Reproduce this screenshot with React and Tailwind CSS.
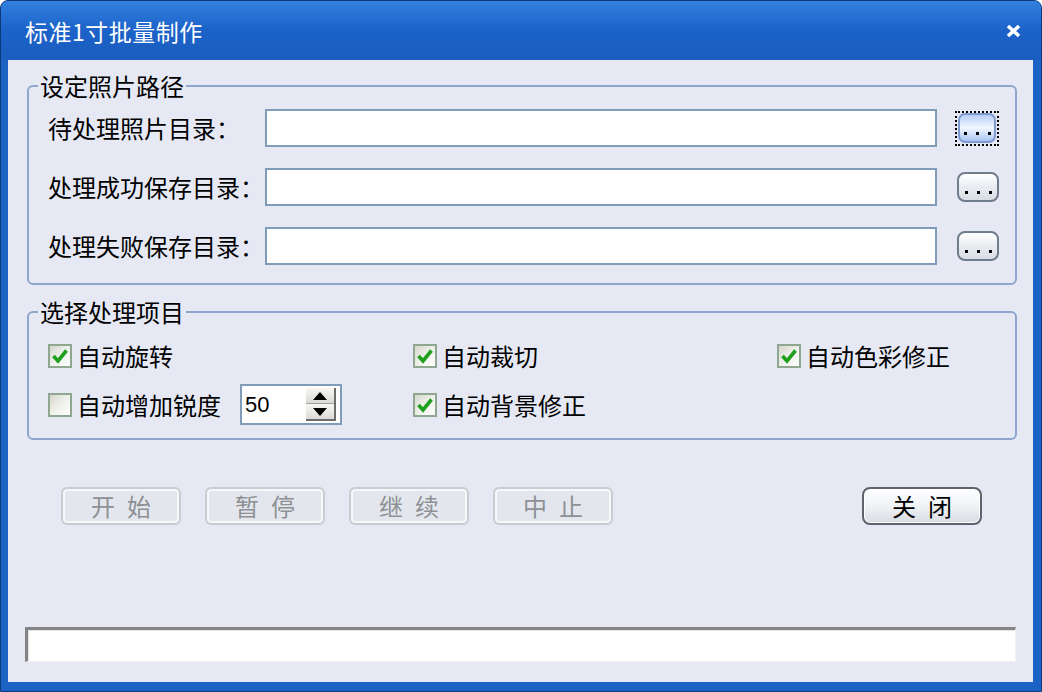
import React from "react";

const cjk = { fontFamily: '"Noto Sans CJK SC", "Noto Sans", sans-serif' };

const Check = ({ checked }) => (
	<span className="w-[24px] h-[24px] shrink-0 border-2 border-[#8fa68f] bg-gradient-to-br from-[#d6d8cf] via-[#eef0ea] to-white flex items-center justify-center">
		{checked && (
			<svg width="18" height="18" viewBox="0 0 18 18">
				<path d="M2.5 9 L7 14 L15.5 3.5" fill="none" stroke="#1fa01f" strokeWidth="3.6" strokeLinejoin="miter" />
			</svg>
		)}
	</span>
);

const CheckItem = ({ checked, label }) => (
	<label className="flex items-center gap-[5px] h-[24px] text-[24px] leading-[24px] text-black">
		<Check checked={checked} />
		<span>{label}</span>
	</label>
);

const Dots = () => (
	<span className="flex gap-[9px] mb-[6px]">
		<span className="w-[3px] h-[3px] bg-black" />
		<span className="w-[3px] h-[3px] bg-black" />
		<span className="w-[3px] h-[3px] bg-black" />
	</span>
);

const BrowseButton = ({ focused }) =>
	focused ? (
		<div className="w-[44px] h-[35px] border-2 border-dotted border-black flex items-center justify-center">
			<button className="w-[38px] h-[30px] rounded-[7px] border-2 border-[#7e9ad0] bg-gradient-to-b from-[#b7cff7] via-[#f2f6ff] to-[#a9c4f2] flex items-end justify-center">
				<Dots />
			</button>
		</div>
	) : (
		<button className="w-[42px] h-[30px] rounded-[8px] border-2 border-[#6f7c8d] bg-gradient-to-b from-white via-[#e9edf1] to-[#d6dde3] flex items-end justify-center">
			<Dots />
		</button>
	);

const PathRow = ({ label, focused }) => (
	<div className="flex items-center h-[38px]">
		<span className="w-[217px] text-[24px] leading-[24px] text-black">{label}</span>
		<input
			type="text"
			className="w-[672px] h-[38px] border-2 border-[#7f9db9] bg-white outline-none"
		/>
		<div className="w-[62px] flex justify-end">
			<BrowseButton focused={focused} />
		</div>
	</div>
);

const ActionButton = ({ label, disabled }) =>
	disabled ? (
		<button className="w-[120px] h-[38px] rounded-[6px] border-2 border-[#c9ccd1] bg-[#e3e7ed] shadow-[inset_0_0_0_2px_#f7f8fa] text-[24px] leading-[24px] text-[#8e9094] tracking-[12px] pl-[12px]">
			{label}
		</button>
	) : (
		<button className="w-[120px] h-[38px] rounded-[8px] border-2 border-[#5c636d] bg-gradient-to-b from-white via-[#f0f2f5] to-[#d7dde4] shadow-[inset_0_0_0_1px_#ffffff] text-[24px] leading-[24px] text-black tracking-[12px] pl-[12px]">
			{label}
		</button>
	);

export default function App() {
	return (
		<div className="w-[1042px] h-[692px] bg-[#1c62c4] border border-[#0c3a78] rounded-t-[8px] flex flex-col overflow-hidden" style={cjk}>
			{/* Title bar */}
			<div className="h-[59px] shrink-0 flex items-center justify-between pl-[24px] pr-[20px] bg-gradient-to-b from-[#3380e0] via-[#1c62c8] to-[#1a5dbf]">
				<span className="text-white text-[23px] leading-[26px] tracking-[0.5px]">标准1寸批量制作</span>
				<svg width="15" height="14" viewBox="0 0 15 14">
					<path d="M2 2 L13 12 M13 2 L2 12" stroke="white" strokeWidth="3.6" />
				</svg>
			</div>

			{/* Client */}
			<div className="flex-1 ml-[7px] mr-[8px] mb-[9px] bg-[#e6e9f4] px-[17px] pb-[20px] flex flex-col">
				<fieldset className="ml-[2px] mt-[14px] w-[990px] border-2 border-[#8ea6cb] rounded-[6px] pl-[19px] pt-[11px] pb-[18px]">
					<legend className="ml-[-10px] px-[2px] text-[24px] leading-[24px] text-black">设定照片路径</legend>
					<div className="flex flex-col gap-[21px]">
						<PathRow label="待处理照片目录：" focused />
						<PathRow label="处理成功保存目录：" />
						<PathRow label="处理失败保存目录：" />
					</div>
				</fieldset>

				<fieldset className="ml-[2px] mt-[15px] w-[990px] border-2 border-[#8ea6cb] rounded-[6px] pl-[19px] pt-[20px] pb-[13px]">
					<legend className="ml-[-10px] px-[2px] text-[24px] leading-[24px] text-black">选择处理项目</legend>
					<div className="grid grid-cols-[365px_364px_1fr] gap-y-[16px] items-center">
						<CheckItem checked label="自动旋转" />
						<CheckItem checked label="自动裁切" />
						<CheckItem checked label="自动色彩修正" />
						<div className="flex items-center gap-[19px]">
							<CheckItem label="自动增加锐度" />
							<div className="w-[102px] h-[41px] border-2 border-[#7f9db9] bg-white flex items-center justify-between pl-[3px] pr-[4px]">
								<span className="text-[22px] leading-[22px] text-black" style={{ fontFamily: '"Liberation Sans", Arial, sans-serif' }}>
									50
								</span>
								<div className="w-[30px] h-[33px] flex flex-col border-r-2 border-b-2 border-[#6c6c6c] bg-[#e4e4e0]">
									<div className="flex-1 flex items-center justify-center border-b border-[#a0a0a0] bg-gradient-to-b from-[#f6f6f4] to-[#dcdcd6]">
										<svg width="14" height="8" viewBox="0 0 14 8"><path d="M7 0 L14 8 L0 8 Z" fill="black" /></svg>
									</div>
									<div className="flex-1 flex items-center justify-center bg-gradient-to-b from-[#f6f6f4] to-[#dcdcd6]">
										<svg width="14" height="8" viewBox="0 0 14 8"><path d="M0 0 L14 0 L7 8 Z" fill="black" /></svg>
									</div>
								</div>
							</div>
						</div>
						<CheckItem checked label="自动背景修正" />
						<div />
					</div>
				</fieldset>

				{/* Buttons */}
				<div className="mt-[47px] ml-[36px] mr-[34px] flex items-center gap-[24px]">
					<ActionButton label="开始" disabled />
					<ActionButton label="暂停" disabled />
					<ActionButton label="继续" disabled />
					<ActionButton label="中止" disabled />
					<div className="ml-auto">
						<ActionButton label="关闭" />
					</div>
				</div>

				{/* Status bar */}
				<div className="mt-auto h-[35px] border-t-[3px] border-l-[3px] border-[#858585] border-r border-b border-r-[#f2f2f2] border-b-[#f2f2f2] bg-white shadow-[inset_1px_1px_0_#e4e4e4]" />
			</div>
		</div>
	);
}
